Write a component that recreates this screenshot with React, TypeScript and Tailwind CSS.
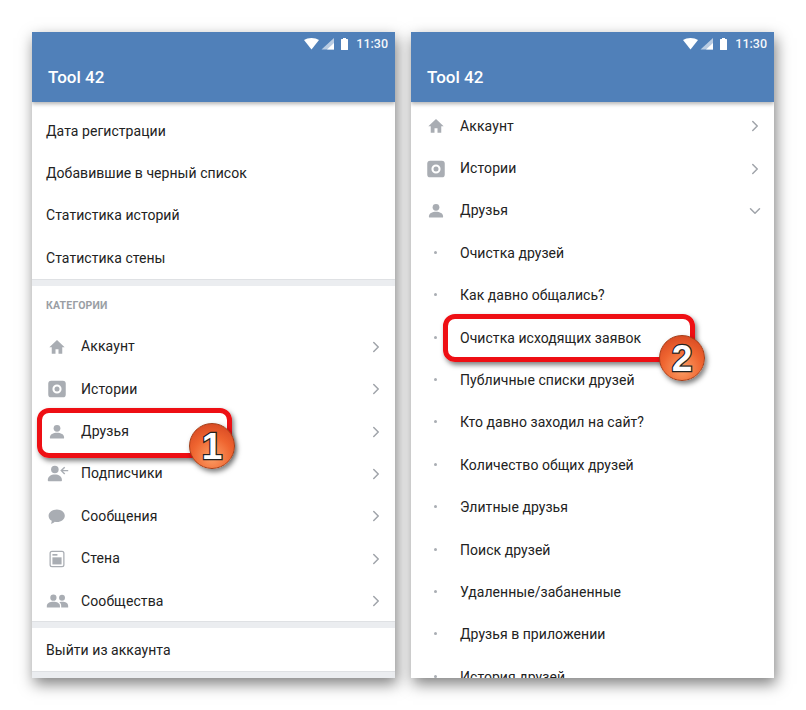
import { ChevronDown, ChevronRight } from 'lucide-react';
import type { ReactNode } from 'react';

const iconClass = 'w-[18px] h-[18px] ml-[2px] text-[#a9adb3] fill-current';

const HomeIcon = () => (
  <svg viewBox="0 0 24 24" className={iconClass}>
    <path d="M12 2.500 1.800 12.200h3.200V21h5v-6h4v6h5v-8.800h3.200z" />
  </svg>
);

const StoriesIcon = () => (
  <svg viewBox="0 0 24 24" className="w-[20px] h-[20px] ml-[1px] text-[#a9adb3] fill-current">
    <path
      fillRule="evenodd"
      d="M5 2h14A3.500 3.500 0 0 1 22.500 5.500v13a3.500 3.500 0 0 1-3.500 3.500H5A3.500 3.500 0 0 1 1.500 18.500v-13A3.500 3.500 0 0 1 5 2zm7 4.500a5.500 5.500 0 1 0 0 11 5.500 5.500 0 0 0 0-11z"
    />
    <circle cx="12" cy="12" r="3" />
  </svg>
);

const PersonIcon = () => (
  <svg viewBox="0 0 24 24" className={iconClass}>
    <circle cx="12" cy="7" r="4.500" />
    <path d="M2.500 19.500c0-4.500 4.500-6.500 9.500-6.500s9.500 2 9.500 6.500c0 .8-.5 1.300-1.300 1.300H3.800c-.8 0-1.300-.5-1.300-1.300z" />
  </svg>
);

const FollowersIcon = () => (
  <svg viewBox="0 0 28 24" className="w-[22px] h-[19px] ml-[1px] text-[#a9adb3] fill-current">
    <circle cx="10" cy="7" r="4.800" />
    <path d="M1 20.500c0-5 4-7.300 9-7.300s9 2.300 9 7.300c0 .8-.5 1.300-1.300 1.300H2.300c-.8 0-1.300-.5-1.300-1.300z" />
    <path d="M27 7.600h-6.800l3-3-1.300-1.300-5 5 5 5 1.300-1.300-3-3H27z" />
  </svg>
);

const MessageIcon = () => (
  <svg viewBox="0 0 24 24" className="w-[19px] h-[19px] ml-[1px] text-[#a9adb3] fill-current">
    <path d="M12.500 3c5.500 0 10 3.500 10 8s-4.500 8-10 8c-.9 0-1.800-.1-2.700-.3-1.200 1.400-2.900 2.200-4.800 2.600.6-1 1-2.400 1-3.800C3.500 16.100 2 13.700 2 11c0-4.500 5-8 10.500-8z" />
  </svg>
);

const WallIcon = () => (
  <svg viewBox="0 0 24 24" className="w-[20px] h-[20px] ml-[1px] text-[#a9adb3] fill-current">
    <path
      fillRule="evenodd"
      d="M6 2h12a3 3 0 0 1 3 3v14a3 3 0 0 1-3 3H6a3 3 0 0 1-3-3V5a3 3 0 0 1 3-3zm0 1.500A1.500 1.500 0 0 0 4.500 5v14A1.500 1.500 0 0 0 6 20.500h12a1.500 1.500 0 0 0 1.500-1.500V5A1.500 1.500 0 0 0 18 3.500z"
    />
    <rect x="6.500" y="6" width="6" height="2" />
    <rect x="6.500" y="10" width="11" height="8.500" />
  </svg>
);

const GroupIcon = () => (
  <svg viewBox="0 0 28 24" className="w-[23px] h-[20px] text-[#a9adb3] fill-current">
    <circle cx="9" cy="8" r="3.800" />
    <circle cx="19.500" cy="8" r="3.600" />
    <path d="M1 18c0-3.200 3.700-5 8-5s8 1.800 8 5v2H1z" />
    <path d="M18.500 20v-2c0-1.900-.8-3.500-2.200-4.500 1-.3 2.100-.5 3.400-.5 4 0 7.300 1.700 7.300 5v2z" />
  </svg>
);

const StatusBar = () => (
  <div className="flex items-center justify-end h-[24px] pr-[7px] gap-[7px]">
    <svg viewBox="0 0 30 12" className="w-[30px] h-[12px] fill-white">
      <path d="M0 2C2 .7 4.600 0 7.500 0s5.500.7 7.500 2L7.500 11.500z" />
      <path d="M30 0v11.500H17.500z" opacity="0.6" />
      <path d="M30 5v6.500h-7z" />
    </svg>
    <svg viewBox="0 0 7 12" className="w-[7px] h-[12px] fill-white">
      <rect x="0" y="1" width="7" height="11" rx="0.5" />
      <rect x="2" y="0" width="3" height="1.500" />
    </svg>
    <span className="text-[12.5px] font-medium text-white/95 ml-[1px]">11:30</span>
  </div>
);

const AppBar = () => (
  <div className="bg-[#5080b9] h-[70px] shadow-[0_2px_4px_rgba(0,0,0,0.3)] relative z-10 shrink-0">
    <StatusBar />
    <div className="pl-[16px] pt-[9px] text-[17px] leading-[24px] font-medium text-white">Tool 42</div>
  </div>
);

const Row = ({ children }: { children: ReactNode }) => (
  <div className="h-[42.4px] flex items-center pl-[14px] pt-[2px] text-[14px] text-[#222] tracking-[0.05px] shrink-0">
    {children}
  </div>
);

const Separator = () => (
  <div className="h-[7px] bg-[#ebedf0] border-t border-[#dfe1e4] shrink-0" />
);

const IconRow = ({ icon, label, open }: { icon: ReactNode; label: string; open?: boolean }) => (
  <div className="h-[42.4px] flex items-center pl-[14px] pr-[7px] pt-[2px] text-[14px] text-[#222] tracking-[0.1px] shrink-0">
    <div className="w-[35px] flex items-center">{icon}</div>
    <span className="flex-1">{label}</span>
    <div className="w-[24px] h-[24px] flex items-center justify-center">
      {open ? (
        <ChevronDown size={18} strokeWidth={2} className="text-[#a0a4aa]" />
      ) : (
        <ChevronRight size={18} strokeWidth={2} className="text-[#a0a4aa]" />
      )}
    </div>
  </div>
);

const SubRow = ({ label }: { label: string }) => (
  <div className="h-[42.4px] flex items-center pl-[23px] pt-[2px] text-[14px] text-[#222] tracking-[0.05px] shrink-0">
    <div className="w-[3px] h-[3px] rounded-full bg-[#a9adb3] mr-[23px] -mt-[2px]" />
    <span>{label}</span>
  </div>
);

const Callout = ({ n, box, badge }: { n: string; box: string; badge: string }) => (
  <>
    <div className={`absolute z-20 border-[5px] border-[#ee0f14] rounded-[12px] shadow-[2px_3px_5px_rgba(0,0,0,0.5)] ${box}`} />
    <div
      className={`absolute z-30 w-[46px] h-[46px] rounded-full flex items-center justify-center border border-[#a33c16] bg-[radial-gradient(circle_at_50%_75%,#fca067,#ef6530_50%,#cf3f1e)] shadow-[2px_3px_5px_rgba(0,0,0,0.5)] ${badge}`}
    >
      <span className="text-[37px] leading-none font-bold text-white [font-family:'Liberation_Sans',sans-serif] [-webkit-text-stroke:2.5px_#222] [paint-order:stroke_fill]">
        {n}
      </span>
    </div>
  </>
);

const Phone = ({ children }: { children: ReactNode }) => (
  <div className="w-[363px] h-[646px] bg-white overflow-hidden flex flex-col shadow-[2px_6px_14px_rgba(0,0,0,0.5)]">
    {children}
  </div>
);

export default function App() {
  return (
    <div className="relative w-[806px] h-[710px] bg-white flex gap-[16px] pl-[32px] pt-[32px] font-['Roboto',sans-serif]">
      <Phone>
        <AppBar />
        <div className="h-[7px] shrink-0" />
        <Row>Дата регистрации</Row>
        <Row>Добавившие в черный список</Row>
        <Row>Статистика историй</Row>
        <Row>Статистика стены</Row>
        <Separator />
        <div className="h-[39px] flex items-center pl-[14px] pt-[2px] text-[10.5px] font-bold text-[#9a9ea4] tracking-[0.2px] shrink-0">
          КАТЕГОРИИ
        </div>
        <IconRow icon={<HomeIcon />} label="Аккаунт" />
        <IconRow icon={<StoriesIcon />} label="Истории" />
        <IconRow icon={<PersonIcon />} label="Друзья" />
        <IconRow icon={<FollowersIcon />} label="Подписчики" />
        <IconRow icon={<MessageIcon />} label="Сообщения" />
        <IconRow icon={<WallIcon />} label="Стена" />
        <IconRow icon={<GroupIcon />} label="Сообщества" />
        <Separator />
        <Row>Выйти из аккаунта</Row>
        <Separator />
      </Phone>
      <Phone>
        <AppBar />
        <div className="h-[2px] shrink-0" />
        <IconRow icon={<HomeIcon />} label="Аккаунт" />
        <IconRow icon={<StoriesIcon />} label="Истории" />
        <IconRow icon={<PersonIcon />} label="Друзья" open />
        <SubRow label="Очистка друзей" />
        <SubRow label="Как давно общались?" />
        <SubRow label="Очистка исходящих заявок" />
        <SubRow label="Публичные списки друзей" />
        <SubRow label="Кто давно заходил на сайт?" />
        <SubRow label="Количество общих друзей" />
        <SubRow label="Элитные друзья" />
        <SubRow label="Поиск друзей" />
        <SubRow label="Удаленные/забаненные" />
        <SubRow label="Друзья в приложении" />
        <SubRow label="История друзей" />
      </Phone>
      <Callout n="1" box="left-[37px] top-[408px] w-[195px] h-[50px]" badge="left-[189px] top-[423px]" />
      <Callout n="2" box="left-[443px] top-[314px] w-[252px] h-[48px]" badge="left-[659px] top-[335px]" />
    </div>
  );
}
